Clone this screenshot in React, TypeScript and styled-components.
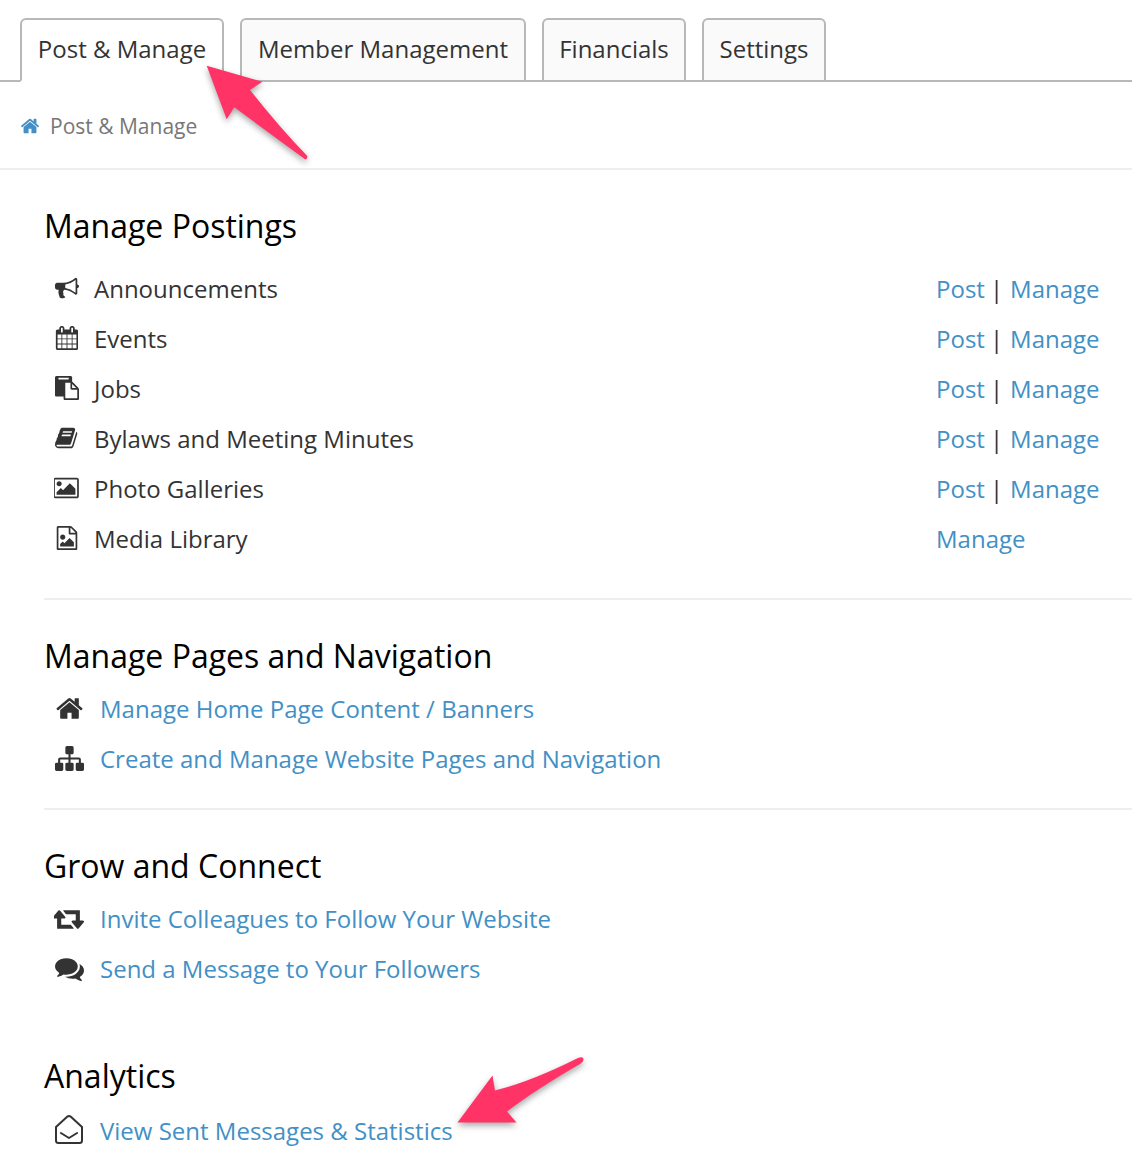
import React from 'react';
import styled, { createGlobalStyle } from 'styled-components';

const GlobalStyle = createGlobalStyle`
  html, body {
    margin: 0;
    padding: 0;
    background: #fff;
    font-family: "Open Sans", "Liberation Sans", sans-serif;
    color: #333;
  }
`;

const Page = styled.div`
  position: relative;
  width: 1132px;
  height: 1176px;
  overflow: hidden;
  background: #fff;
`;

const TabBar = styled.div`
  display: flex;
  gap: 16px;
  height: 64px;
  margin-top: 18px;
  padding-left: 20px;
  box-sizing: border-box;
  border-bottom: 2px solid #b8b8b8;
`;

const Tab = styled.div<{ $active?: boolean; $width: number }>`
  width: ${(p) => p.$width}px;
  height: 64px;
  box-sizing: border-box;
  display: flex;
  align-items: center;
  justify-content: center;
  padding-bottom: 4px;
  font-size: 24px;
  color: #333;
  background: ${(p) => (p.$active ? '#fff' : '#fafafa')};
  border: 2px solid #b8b8b8;
  border-bottom: ${(p) => (p.$active ? '2px solid #fff' : '2px solid #b8b8b8')};
  border-radius: 6px 6px 0 0;
`;

const Breadcrumb = styled.div`
  display: flex;
  align-items: center;
  height: 88px;
  box-sizing: border-box;
  padding: 2px 0 0 20px;
  gap: 10px;
  font-size: 21px;
  color: #777;
  border-bottom: 2px solid #eee;
`;

const Content = styled.div`
  margin-left: 44px;
`;

const Section = styled.section<{ $top: number; $pad: number; $rule?: boolean }>`
  padding-top: ${(p) => p.$top}px;
  padding-bottom: ${(p) => p.$pad}px;
  border-bottom: ${(p) => (p.$rule ? '2px solid #eee' : 'none')};
`;

const Heading = styled.h2<{ $gap: number }>`
  margin: 0 0 ${(p) => p.$gap}px;
  font-size: 32px;
  line-height: 40px;
  font-weight: 400;
  color: #000;
`;

const Row = styled.div`
  display: grid;
  grid-template-columns: 1fr 196px;
  align-items: center;
  height: 50px;
  font-size: 24px;
`;

const Label = styled.div`
  display: flex;
  align-items: center;
`;

const IconCell = styled.span<{ $wide?: boolean }>`
  width: ${(p) => (p.$wide ? 30 : 27)}px;
  margin: 0 ${(p) => (p.$wide ? 16 : 14)}px 0 ${(p) => (p.$wide ? 10 : 9)}px;
  display: flex;
  align-items: center;
  justify-content: center;
  color: #333;
`;

const Link = styled.a`
  color: #4290c5;
  text-decoration: none;
`;

const Actions = styled.div`
  display: flex;
`;

const Pipe = styled.span`
  margin: 0 7px 0 5px;
`;

const Arrow = styled.svg`
  position: absolute;
  left: 0;
  top: 0;
  overflow: visible;
  filter: drop-shadow(0 3px 3px rgba(0, 0, 0, 0.35));
`;

const FaIcon = ({ d, size, vb = 1792, color = 'currentColor' }: { d: string; size: number; vb?: number; color?: string }) => (
  <svg width={size * (vb / 1792)} height={size} viewBox={`0 0 ${vb} 1792`} fill={color} style={{ flexShrink: 0 }}>
    <path d={d} />
  </svg>
);

const paths = {
  home: 'M1472 992v480q0 26-19 45t-45 19h-384v-384h-256v384h-384q-26 0-45-19t-19-45v-480q0-1 .5-3t.5-3l575-474 575 474q1 2 1 6zm223-69l-62 74q-8 8-21 10h-3q-13 0-21-7l-692-577-692 577q-12 8-24 7-13-2-21-10l-62-74q-8-10-7-23.5t11-21.5l719-599q32-26 76-26t76 26l244 204v-195q0-14 9-23t23-9h192q14 0 23 9t9 23v408l219 182q10 8 11 21.5t-7 23.5z',
  bullhorn: 'M1664 640q53 0 90.5 37.5t37.5 90.5-37.5 90.5-90.5 37.5v384q0 52-38 90t-90 38q-417-347-812-380-58 19-91 66t-31 100.5 40 92.5q-20 33-23 65.5t6 58 33.5 55 48 50 61.5 50.5q-29 58-111.5 83t-168.5 11.5-132-55.5q-7-23-29.5-87.5t-32-94.5-23-89-15-101 3.5-98.5 22-110.5h-122q-66 0-113-47t-47-113v-192q0-66 47-113t113-47h480q435 0 896-384 52 0 90 38t38 90v384zm-128 604v-954q-394 302-768 343v270q377 42 768 341z',
  calendar: 'M192 1664h288v-288h-288v288zm352 0h320v-288h-320v288zm-352-352h288v-320h-288v320zm352 0h320v-320h-320v320zm-352-384h288v-288h-288v288zm736 736h320v-288h-320v288zm-384-736h320v-288h-320v288zm768 736h288v-288h-288v288zm-384-352h320v-320h-320v320zm-352-864v-288q0-13-9.5-22.5t-22.5-9.5h-64q-13 0-22.5 9.5t-9.5 22.5v288q0 13 9.5 22.5t22.5 9.5h64q13 0 22.5-9.5t9.5-22.5zm736 864h288v-320h-288v320zm-384-384h320v-288h-320v288zm384 0h288v-288h-288v288zm32-480v-288q0-13-9.5-22.5t-22.5-9.5h-64q-13 0-22.5 9.5t-9.5 22.5v288q0 13 9.5 22.5t22.5 9.5h64q13 0 22.5-9.5t9.5-22.5zm384-64v1280q0 52-38 90t-90 38h-1408q-52 0-90-38t-38-90v-1280q0-52 38-90t90-38h128v-96q0-66 47-113t113-47h64q66 0 113 47t47 113v96h384v-96q0-66 47-113t113-47h64q66 0 113 47t47 113v96h128q52 0 90 38t38 90z',
  paste: 'M768 1664h896v-640h-416q-40 0-68-28t-28-68v-416h-384v1152zm256-1440v-64q0-13-9.5-22.5t-22.5-9.5h-704q-13 0-22.5 9.5t-9.5 22.5v64q0 13 9.5 22.5t22.5 9.5h704q13 0 22.5-9.5t9.5-22.5zm256 672h299l-299-299v299zm512 128v672q0 40-28 68t-68 28h-960q-40 0-68-28t-28-68v-160h-544q-40 0-68-28t-28-68v-1344q0-40 28-68t68-28h1088q40 0 68 28t28 68v328q21 13 36 28l408 408q28 28 48 76t20 88z',
  book: 'M1639 478q40 57 18 129l-275 906q-19 64-76.5 107.5t-122.5 43.5h-923q-77 0-148.5-53.5t-99.5-131.5q-24-67-2-127 0-4 3-27t4-37q1-8-3-21.5t-3-19.5q2-11 8-21t16.5-23.5 16.5-23.5q23-38 45-91.5t30-91.5q3-10 .5-30t-.5-28q3-11 17-28t17-23q21-36 42-92t25-90q1-9-2.5-32t.5-28q4-13 22-30.5t22-22.5q19-26 42.5-84.5t27.5-96.5q1-8-3-25.5t-2-26.5q2-8 9-18t18-23 17-21q8-12 16.5-30.5t15-35 16-36 19.5-32 26.5-23.5 36-11.5 47.5 5.5l-1 3q38-9 51-9h761q74 0 114 56t18 130l-274 906q-36 119-71.5 153.5t-128.5 34.5h-869q-27 0-38 15-11 16-1 43 24 70 144 70h923q29 0 56-15.5t35-41.5l300-987q7-22 5-57 38 15 59 43zm-1064 2q-4 13 2 22.5t20 9.5h608q13 0 25.5-9.5t16.5-22.5l21-64q4-13-2-22.5t-20-9.5h-608q-13 0-25.5 9.5t-16.5 22.5zm-83 256q-4 13 2 22.5t20 9.5h608q13 0 25.5-9.5t16.5-22.5l21-64q4-13-2-22.5t-20-9.5h-608q-13 0-25.5 9.5t-16.5 22.5z',
  picture: 'M576 576q0 80-56 136t-136 56-136-56-56-136 56-136 136-56 136 56 56 136zm1024 384v448h-1408v-192l320-320 160 160 512-512zm96-704h-1600q-13 0-22.5 9.5t-9.5 22.5v1216q0 13 9.5 22.5t22.5 9.5h1600q13 0 22.5-9.5t9.5-22.5v-1216q0-13-9.5-22.5t-22.5-9.5zm160 32v1216q0 66-47 113t-113 47h-1600q-66 0-113-47t-47-113v-1216q0-66 47-113t113-47h1600q66 0 113 47t47 113z',
  fileImage: 'M1596 380q28 28 48 76t20 88v1152q0 40-28 68t-68 28h-1344q-40 0-68-28t-28-68v-1600q0-40 28-68t68-28h896q40 0 88 20t76 48zm-444-244v376h376q-10-29-22-41l-313-313q-12-12-41-22zm384 1528v-1024h-416q-40 0-68-28t-28-68v-416h-768v1536h1280zm-128-448v320h-1024v-192l192-192 128 128 384-384zm-832-192q-80 0-136-56t-56-136 56-136 136-56 136 56 56 136-56 136-136 56z',
  sitemap: 'M1792 1248v320q0 40-28 68t-68 28h-320q-40 0-68-28t-28-68v-320q0-40 28-68t68-28h96v-192h-512v192h96q40 0 68 28t28 68v320q0 40-28 68t-68 28h-320q-40 0-68-28t-28-68v-320q0-40 28-68t68-28h96v-192h-512v192h96q40 0 68 28t28 68v320q0 40-28 68t-68 28h-320q-40 0-68-28t-28-68v-320q0-40 28-68t68-28h96v-192q0-52 38-90t90-38h512v-192h-96q-40 0-68-28t-28-68v-320q0-40 28-68t68-28h320q40 0 68 28t28 68v320q0 40-28 68t-68 28h-96v192h512q52 0 90 38t38 90v192h96q40 0 68 28t28 68z',
  retweet: 'M1216 1504q0 13-9.5 22.5t-22.5 9.5h-960q-8 0-13.5-2t-9-7-5.5-8-3-11.5-1-11.5v-600h-192q-26 0-45-19t-19-45q0-24 15-41l320-384q19-22 49-22t49 22l320 384q15 17 15 41 0 26-19 45t-45 19h-192v384h576q16 0 25 11l160 192q7 10 7 21zm640-416q0 24-15 41l-320 384q-20 23-49 23t-49-23l-320-384q-15-17-15-41 0-26 19-45t45-19h192v-384h-576q-16 0-25-12l-160-192q-7-9-7-20 0-13 9.5-22.5t22.5-9.5h960q8 0 13.5 2t9 7 5.5 8 3 11.5 1 11.5v600h192q26 0 45 19t19 45z',
  comments: 'M1408 768q0 139-94 257t-256.5 186.5-353.5 68.5q-86 0-176-16-124 88-278 128-36 9-86 16h-3q-11 0-20.5-8t-11.5-21q-1-3-1-6.5t.5-6.5 2-6l2.5-5 3.5-5.5 4-5 4.5-5 4-4.5q5-6 23-25t26-29.5 22.5-29 25-38.5 20.5-44q-124-72-195-177t-71-224q0-139 94-257t256.5-186.5 353.5-68.5 353.5 68.5 256.5 186.5 94 257zm384 256q0 120-71 224.5t-195 176.5q10 24 20.5 44t25 38.5 22.5 29 26 29.5 23 25q1 1 4 4.5t4.5 5 4 5 3.5 5.5l2.5 5 2 6 .5 6.5-1 6.5q-3 14-13 22t-22 7q-50-7-86-16-154-40-278-128-90 16-176 16-271 0-472-132 58 4 88 4 161 0 309-45t264-129q125-92 192-212t67-254q0-77-23-152 129 71 204 178t75 230z',
};

const EnvelopeOpen = () => (
  <svg width="30" height="32" viewBox="0 0 30 32" fill="none" stroke="#333" strokeWidth="2" strokeLinejoin="round" strokeLinecap="round">
    <path d="M2 13 L13.4 2.6 Q15 1.4 16.6 2.6 L28 13 V26.5 Q28 29 25.5 29 H4.5 Q2 29 2 26.5 Z" />
    <path d="M6.9 19 L15 24 L23.1 19" />
  </svg>
);

const postings = [
  { name: 'Announcements', icon: paths.bullhorn, vb: 1792 },
  { name: 'Events', icon: paths.calendar, vb: 1664 },
  { name: 'Jobs', icon: paths.paste, vb: 1792 },
  { name: 'Bylaws and Meeting Minutes', icon: paths.book, vb: 1664 },
  { name: 'Photo Galleries', icon: paths.picture, vb: 1920 },
  { name: 'Media Library', icon: paths.fileImage, vb: 1792, manageOnly: true },
];

const tabs = [
  { label: 'Post & Manage', width: 204 },
  { label: 'Member Management', width: 286 },
  { label: 'Financials', width: 144 },
  { label: 'Settings', width: 124 },
];

export default function App() {
  return (
    <Page>
      <GlobalStyle />
      <TabBar>
        {tabs.map((t, i) => (
          <Tab key={t.label} $active={i === 0} $width={t.width}>{t.label}</Tab>
        ))}
      </TabBar>
      <Breadcrumb>
        <FaIcon d={paths.home} size={20} color="#4290c5" />
        Post &amp; Manage
      </Breadcrumb>
      <Content>
        <Section $top={36} $pad={35} $rule>
          <Heading $gap={17}>Manage Postings</Heading>
          {postings.map((p) => (
            <Row key={p.name}>
              <Label>
                <IconCell><FaIcon d={p.icon} size={24} vb={p.vb} /></IconCell>
                {p.name}
              </Label>
              <Actions>
                {!p.manageOnly && <><Link>Post</Link><Pipe>|</Pipe></>}
                <Link>Manage</Link>
              </Actions>
            </Row>
          ))}
        </Section>
        <Section $top={36} $pad={25} $rule>
          <Heading $gap={7}>Manage Pages and Navigation</Heading>
          <Row>
            <Label>
              <IconCell $wide><FaIcon d={paths.home} size={29} /></IconCell>
              <Link>Manage Home Page Content / Banners</Link>
            </Label>
          </Row>
          <Row>
            <Label>
              <IconCell $wide><FaIcon d={paths.sitemap} size={29} /></IconCell>
              <Link>Create and Manage Website Pages and Navigation</Link>
            </Label>
          </Row>
        </Section>
        <Section $top={36} $pad={63}>
          <Heading $gap={7}>Grow and Connect</Heading>
          <Row>
            <Label>
              <IconCell $wide><FaIcon d={paths.retweet} size={29} vb={1856} /></IconCell>
              <Link>Invite Colleagues to Follow Your Website</Link>
            </Label>
          </Row>
          <Row>
            <Label>
              <IconCell $wide><FaIcon d={paths.comments} size={29} /></IconCell>
              <Link>Send a Message to Your Followers</Link>
            </Label>
          </Row>
        </Section>
        <Section $top={0} $pad={0}>
          <Heading $gap={9}>Analytics</Heading>
          <Row>
            <Label>
              <IconCell $wide><EnvelopeOpen /></IconCell>
              <Link>View Sent Messages &amp; Statistics</Link>
            </Label>
          </Row>
        </Section>
      </Content>
      <Arrow width="1" height="1">
        <path
          fill="#ff3366"
          d="M206.7 65.7 L262.3 81.7 L250 90 Q280 128 307.3 156 Q307.5 159.5 305 159.3 L234.3 107.3 L226.7 119.3 Z"
        />
      </Arrow>
      <Arrow width="1" height="1">
        <path
          fill="#ff3366"
          d="M457.5 1122.5 L492.5 1075.5 L495 1090.5 Q530 1082 578 1058 Q584 1056 583.5 1060 Q583 1062 580 1064 Q535 1090 507 1111.5 L516.5 1122.5 Z"
        />
      </Arrow>
    </Page>
  );
}
